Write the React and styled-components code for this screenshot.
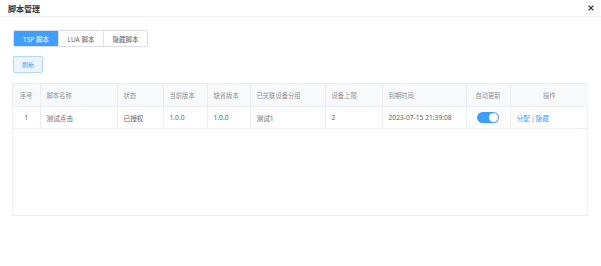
import React from 'react';
import styled, { createGlobalStyle } from 'styled-components';

const GlobalStyle = createGlobalStyle`
  html, body {
    margin: 0;
    padding: 0;
    background: #fff;
    font-family: "Noto Sans", "Noto Sans CJK SC", sans-serif;
  }
`;

const Dialog = styled.div`
  width: 601px;
  height: 266px;
  background: #fff;
  box-sizing: border-box;
`;

const Header = styled.div`
  height: 16px;
  padding: 0 8px;
  display: flex;
  align-items: center;
  justify-content: space-between;
  border-bottom: 1px solid #ebeef5;
`;

const Title = styled.span`
  font-size: 8px;
  font-weight: 700;
  color: #303133;
`;

const Close = styled.svg`
  width: 6px;
  height: 6px;
  margin-right: -1px;
`;

const Body = styled.div`
  padding: 13px 13px 0 12px;
  display: flex;
  flex-direction: column;
  align-items: flex-start;
`;

const Tabs = styled.div`
  display: flex;
  border: 1px solid #dcdfe6;
  border-radius: 2px;
  overflow: hidden;
  margin-left: 1px;
`;

const Tab = styled.div`
  width: ${(p) => p.w}px;
  height: 15px;
  display: flex;
  align-items: center;
  justify-content: center;
  font-size: 6.5px;
  color: ${(p) => (p.active ? '#fff' : '#606266')};
  background: ${(p) => (p.active ? '#409eff' : '#fff')};
  border-left: ${(p) => (p.first ? 'none' : '1px solid #dcdfe6')};
`;

const RefreshButton = styled.div`
  margin: 9px 0 0 1px;
  width: 28px;
  height: 15px;
  display: flex;
  align-items: center;
  justify-content: center;
  background: #ecf5ff;
  border: 1px solid #b3d8ff;
  border-radius: 2px;
  color: #409eff;
  font-size: 6px;
`;

const TableWrap = styled.div`
  margin-top: 10px;
  width: 576px;
  height: 133px;
  border: 1px solid #ebeef5;
  box-sizing: border-box;
`;

const Table = styled.table`
  width: 100%;
  table-layout: fixed;
  border-collapse: collapse;
  font-size: 6.7px;
`;

const Th = styled.th`
  height: 22px;
  padding: 0 0 0 6px;
  background: #f8f9fb;
  color: #909399;
  font-weight: 400;
  font-size: 6.3px;
  text-align: ${(p) => (p.center ? 'center' : 'left')};
  ${(p) => p.center && 'padding-left: 0;'}
  border-right: 1px solid #ebeef5;
  border-bottom: 1px solid #ebeef5;
  &:last-child {
    border-right: none;
  }
`;

const Td = styled.td`
  height: 21px;
  padding: 0 0 0 6px;
  color: #606266;
  text-align: ${(p) => (p.center ? 'center' : 'left')};
  ${(p) => p.center && 'padding-left: 0;'}
  border-right: 1px solid #ebeef5;
  border-bottom: 1px solid #ebeef5;
  &:last-child {
    border-right: none;
  }
`;

const Switch = styled.span`
  display: inline-flex;
  align-items: center;
  justify-content: flex-end;
  width: 22px;
  height: 11px;
  padding: 0 1px;
  box-sizing: border-box;
  border-radius: 6px;
  background: #409eff;
  vertical-align: middle;
  &::after {
    content: '';
    width: 9px;
    height: 9px;
    border-radius: 50%;
    background: #fff;
  }
`;

const Link = styled.span`
  color: #409eff;
`;

const Sep = styled.span`
  color: #409eff;
  margin: 0 1px;
`;

const widths = [27, 77, 46, 44, 43, 75, 57, 84, 44, 78];

const columns = [
  { title: '序号', center: true },
  { title: '脚本名称' },
  { title: '状态' },
  { title: '当前版本' },
  { title: '缺省版本' },
  { title: '已关联设备分组' },
  { title: '设备上限' },
  { title: '到期时间' },
  { title: '自动更新', center: true },
  { title: '操作', center: true },
];

const App = () => {
  return (
    <Dialog>
      <GlobalStyle />
      <Header>
        <Title>脚本管理</Title>
        <Close viewBox="0 0 10 10">
          <path d="M1 1 L9 9 M9 1 L1 9" stroke="#303133" strokeWidth="2" />
        </Close>
      </Header>
      <Body>
        <Tabs>
          <Tab w={44} active first>TSP 脚本</Tab>
          <Tab w={44}>LUA 脚本</Tab>
          <Tab w={43}>隐藏脚本</Tab>
        </Tabs>
        <RefreshButton>刷新</RefreshButton>
        <TableWrap>
          <Table>
            <colgroup>
              {widths.map((w, i) => (
                <col key={i} style={{ width: w }} />
              ))}
            </colgroup>
            <thead>
              <tr>
                {columns.map((c) => (
                  <Th key={c.title} center={c.center}>{c.title}</Th>
                ))}
              </tr>
            </thead>
            <tbody>
              <tr>
                <Td center>1</Td>
                <Td>测试点击</Td>
                <Td>已授权</Td>
                <Td>1.0.0</Td>
                <Td>1.0.0</Td>
                <Td>测试1</Td>
                <Td>2</Td>
                <Td>2023-07-15 21:39:08</Td>
                <Td center><Switch /></Td>
                <Td>
                  <Link>分配</Link>
                  <Sep>|</Sep>
                  <Link>隐藏</Link>
                </Td>
              </tr>
            </tbody>
          </Table>
        </TableWrap>
      </Body>
    </Dialog>
  );
};

export default App;
